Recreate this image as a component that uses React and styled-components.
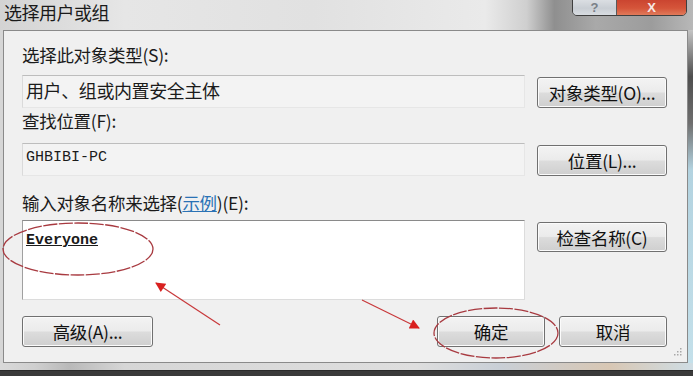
import styled, { createGlobalStyle } from "styled-components";

const GlobalStyle = createGlobalStyle`
  html, body {
    margin: 0;
    padding: 0;
    background: #3c3c3c;
  }
  * {
    box-sizing: border-box;
  }
`;

const CJK = `"Noto Sans CJK SC", "Noto Sans", sans-serif`;
const MONO = `"Liberation Mono", "DejaVu Sans Mono", monospace`;

const Window = styled.div`
  position: relative;
  width: 693px;
  height: 376px;
  overflow: hidden;
  display: flex;
  flex-direction: column;
  font-family: ${CJK};
  color: #1b1b1b;
`;

const TitleBar = styled.div`
  height: 30px;
  display: flex;
  align-items: flex-start;
  background: linear-gradient(
    90deg,
    #d3d3d3 0%,
    #e6e6e6 18%,
    #e1e1e1 45%,
    #eaeaea 70%,
    #cfcfcf 76%,
    #8f8f8f 80%,
    #a9a9a9 86%,
    #9c9c9c 94%,
    #b8b8b8 100%
  );
`;

const Title = styled.div`
  font-size: 18px;
  line-height: 24px;
  padding-left: 4px;
  color: #1a1a1a;
  letter-spacing: -0.5px;
`;

const Caption = styled.div`
  margin-left: auto;
  margin-right: 6px;
  margin-top: -3px;
  display: flex;
  height: 19px;
  border: 1px solid #3f3f3f;
  border-radius: 0 0 5px 5px;
  overflow: hidden;
`;

const CaptionButton = styled.div`
  width: ${(p) => p.$w}px;
  display: flex;
  justify-content: center;
  align-items: flex-start;
  padding-top: 3px;
  font-family: "Liberation Sans", sans-serif;
  font-weight: bold;
  font-size: 13px;
  line-height: 13px;
  color: ${(p) => (p.$close ? "#f6e8e4" : "#7a8088")};
  background: ${(p) =>
    p.$close
      ? "linear-gradient(#c8412e, #d5553a 60%, #e07a5a)"
      : "linear-gradient(#dfe2e6, #c9ced4 60%, #d8dce1)"};
  & + & {
    border-left: 1px solid #5a5a5a;
  }
`;

const Body = styled.div`
  display: flex;
  height: 333px;
`;

const LeftFrame = styled.div`
  width: 3px;
  background: #d6d6d6;
`;

const RightFrame = styled.div`
  width: 5px;
  background: linear-gradient(
    #c4c4c4 0%,
    #4e4e4e 14%,
    #6e6e6e 28%,
    #b3d3e0 42%,
    #c4e0ea 100%
  );
`;

const Panel = styled.div`
  position: relative;
  width: 685px;
  border: 1px solid #8a8a8a;
  background: #f0f0f0;
  padding: 14px 0 0 18px;
  display: flex;
  flex-direction: column;
`;

const Label = styled.div`
  height: 20px;
  line-height: 20px;
  font-size: 17.5px;
  margin-top: ${(p) => p.$mt || 0}px;
  margin-bottom: ${(p) => p.$mb || 0}px;
  letter-spacing: -0.3px;
`;

const Link = styled.span`
  color: #2a72b5;
  text-decoration: underline;
`;

const Row = styled.div`
  display: grid;
  grid-template-columns: 503px 130px;
  column-gap: 12px;
  align-items: start;
`;

const ReadBox = styled.div`
  height: 33px;
  padding: 4px 3px 0;
  line-height: 20px;
  background: #f3f3f3;
  border: 1px solid #e6e6e6;
  border-top-color: #bdbdbd;
  border-left-color: #dadada;
  font-family: ${(p) => (p.$mono ? MONO : CJK)};
  font-size: ${(p) => (p.$mono ? 15 : 18)}px;
  letter-spacing: ${(p) => (p.$mono ? 0 : -0.4)}px;
`;

const NameBox = styled.div`
  height: 80px;
  padding: 11px 3px 0;
  background: #fff;
  border: 1px solid #dcdcdc;
  border-top-color: #8a8a8a;
  border-left-color: #a0a0a0;
  font-family: ${MONO};
  font-size: 15px;
  line-height: 18px;
`;

const Name = styled.span`
  font-weight: bold;
  text-decoration: underline;
  color: #1a1a1a;
`;

const Button = styled.div`
  width: ${(p) => p.$w || 130}px;
  height: ${(p) => p.$h || 31}px;
  margin-top: ${(p) => p.$mt || 0}px;
  display: flex;
  align-items: center;
  justify-content: center;
  border: 1px solid #707070;
  border-radius: 3px;
  box-shadow: inset 0 0 0 1px #fbfbfb;
  background: linear-gradient(#f3f3f3 0%, #ebebeb 48%, #dcdcdc 52%, #cfcfcf 100%);
  font-size: 17.5px;
  color: #111;
  white-space: nowrap;
  letter-spacing: -0.3px;
`;

const Footer = styled.div`
  margin-top: 16px;
  display: flex;
  align-items: center;
  width: 645px;
`;

const FooterRight = styled.div`
  margin-left: auto;
  display: flex;
  gap: 14px;
`;

const Grip = styled.svg`
  position: absolute;
  right: 5px;
  bottom: 4px;
`;

const BottomFrame = styled.div`
  height: 7px;
  background: linear-gradient(
    90deg,
    #d9d9d9 0%,
    #cfcfcf 5%,
    #b9b9b9 10%,
    #d6d6d6 18%,
    #dedede 60%,
    #c9cfd6 72%,
    #d8c7b4 88%,
    #cfdde4 100%
  );
`;

const Strip = styled.div`
  flex: 1;
  background: #3a3a3a;
  border-top: 1px solid #2a2a2a;
`;

const Overlay = styled.svg`
  position: absolute;
  left: 0;
  top: 0;
  pointer-events: none;
`;

export default function App() {
  return (
    <>
      <GlobalStyle />
      <Window>
        <TitleBar>
          <Title>选择用户或组</Title>
          <Caption>
            <CaptionButton $w={43}>?</CaptionButton>
            <CaptionButton $w={70} $close>
              X
            </CaptionButton>
          </Caption>
        </TitleBar>
        <Body>
          <LeftFrame />
          <Panel>
            <Label $mb={10}>选择此对象类型(S):</Label>
            <Row>
              <ReadBox>用户、组或内置安全主体</ReadBox>
              <Button $mt={2}>对象类型(O)...</Button>
            </Row>
            <Label $mt={3} $mb={12}>
              查找位置(F):
            </Label>
            <Row>
              <ReadBox $mono>GHBIBI-PC</ReadBox>
              <Button $mt={2}>位置(L)...</Button>
            </Row>
            <Label $mt={17} $mb={7}>
              输入对象名称来选择(<Link>示例</Link>)(E):
            </Label>
            <Row>
              <NameBox>
                <Name>Everyone</Name>
              </NameBox>
              <Button $mt={2} $h={30}>
                检查名称(C)
              </Button>
            </Row>
            <Footer>
              <Button $w={131} $h={31}>
                高级(A)...
              </Button>
              <FooterRight>
                <Button $w={108} $h={31}>
                  确定
                </Button>
                <Button $w={108} $h={31}>
                  取消
                </Button>
              </FooterRight>
            </Footer>
            <Grip width="10" height="10" viewBox="0 0 10 10">
              <g fill="#a8a8a8">
                <rect x="8" y="0" width="1.5" height="1.5" />
                <rect x="5" y="3" width="1.5" height="1.5" />
                <rect x="8" y="3" width="1.5" height="1.5" />
                <rect x="2" y="6" width="1.5" height="1.5" />
                <rect x="5" y="6" width="1.5" height="1.5" />
                <rect x="8" y="6" width="1.5" height="1.5" />
              </g>
            </Grip>
          </Panel>
          <RightFrame />
        </Body>
        <BottomFrame />
        <Strip />

        <Overlay width="693" height="376" viewBox="0 0 693 376">
          <defs>
            <marker
              id="head"
              viewBox="0 0 10 10"
              refX="9"
              refY="5"
              markerWidth="13"
              markerHeight="10"
              markerUnits="userSpaceOnUse"
              orient="auto"
            >
              <path d="M0 0 L10 5 L0 10 Z" fill="#d9201f" />
            </marker>
          </defs>
          <ellipse
            cx="78"
            cy="249"
            rx="75"
            ry="26"
            fill="none"
            stroke="#a83a40"
            strokeWidth="1.3"
            strokeDasharray="14 1.5"
          />
          <ellipse
            cx="496"
            cy="333"
            rx="62"
            ry="25"
            fill="none"
            stroke="#a83a40"
            strokeWidth="1.3"
            strokeDasharray="14 1.5"
          />
          <line
            x1="220"
            y1="325"
            x2="156"
            y2="283"
            stroke="#c8383a"
            strokeWidth="1.2"
            markerEnd="url(#head)"
          />
          <line
            x1="362"
            y1="300"
            x2="419"
            y2="328"
            stroke="#c8383a"
            strokeWidth="1.2"
            markerEnd="url(#head)"
          />
        </Overlay>
      </Window>
    </>
  );
}
